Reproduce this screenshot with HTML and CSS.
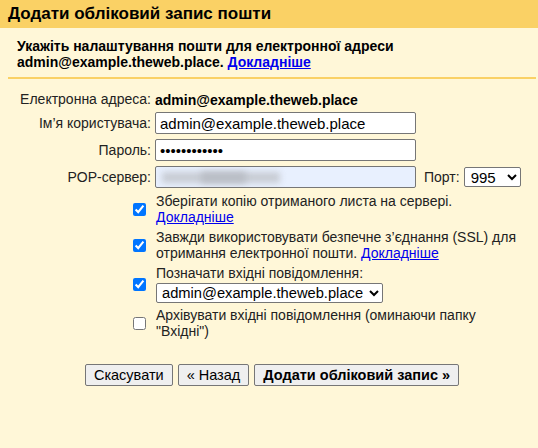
FILE: index.html
```html
<!DOCTYPE html>
<html lang="uk">
<head>
<meta charset="utf-8">
<link rel="stylesheet" href="styles.css">
</head>
<body>
<div class="dialog">
  <h1 class="title">Додати обліковий запис пошти</h1>
  <div class="intro">
    Укажіть налаштування пошти для електронної адреси<br>
    admin@example.theweb.place. <a href="#">Докладніше</a>
  </div>
  <div class="form">
    <div class="label">Електронна адреса:</div>
    <div class="value email">admin@example.theweb.place</div>

    <label class="label" for="u">Ім’я користувача:</label>
    <div class="value"><input id="u" class="field" type="text" value="admin@example.theweb.place"></div>

    <label class="label" for="p">Пароль:</label>
    <div class="value"><input id="p" class="field" type="password" value="abcdefghijkl"></div>

    <div class="label">POP-сервер:</div>
    <div class="value server-row">
      <div class="field autofill"><span class="blur"></span><span class="blur dark"></span></div>
      <span class="port-label">Порт:</span>
      <select class="port"><option>995</option></select>
    </div>
  </div>

  <div class="checks">
    <div class="check">
      <input type="checkbox" checked>
      <div class="check-text">Зберігати копію отриманого листа на сервері.<br><a href="#">Докладніше</a></div>
    </div>
    <div class="check">
      <input type="checkbox" checked>
      <div class="check-text">Завжди використовувати безпечне з’єднання (SSL) для<br>отримання електронної пошти. <a href="#">Докладніше</a></div>
    </div>
    <div class="check">
      <input type="checkbox" checked>
      <div class="check-text">Позначати вхідні повідомлення:<br><select class="label-select"><option>admin@example.theweb.place</option></select></div>
    </div>
    <div class="check">
      <input type="checkbox">
      <div class="check-text">Архівувати вхідні повідомлення (оминаючи папку<br>"Вхідні")</div>
    </div>
  </div>

  <div class="buttons">
    <button class="btn">Скасувати</button>
    <button class="btn">« Назад</button>
    <button class="btn primary">Додати обліковий запис »</button>
  </div>
</div>
</body>
</html>
```

FILE: styles.css
```css
html, body {
  margin: 0;
  padding: 0;
  background: #fff7d8;
  height: 100%;
}
body {
  font-family: "Liberation Sans", Arial, sans-serif;
  color: #222;
  font-size: 14px;
}
.title {
  margin: 0;
  height: 28px;
  line-height: 27px;
  padding: 0 8px;
  background: #fad165;
  color: #000;
  font-size: 17px;
  font-weight: bold;
}
.intro {
  margin: 0 2px 0 8px;
  padding: 10px 9px 7px;
  border-bottom: 2px solid #fad165;
  font-weight: bold;
  font-size: 14px;
  line-height: 16px;
  color: #000;
}
a {
  color: #0000ee;
  text-decoration: underline;
}
.form {
  display: grid;
  grid-template-columns: 143px auto;
  column-gap: 4px;
  row-gap: 5px;
  margin: 12px 0 0 8px;
  align-items: center;
  font-size: 14px;
}
.label {
  text-align: right;
  color: #222;
}
.email {
  font-weight: bold;
  color: #000;
  margin-bottom: -2px;
}
.field {
  box-sizing: border-box;
  width: 261px;
  height: 22px;
  margin: 0;
  padding: 1px 4px;
  border: 1px solid #767676;
  border-radius: 2px;
  background: #fff;
  font-family: "Liberation Sans", Arial, sans-serif;
  font-size: 15px;
  color: #000;
  display: block;
}
.server-row {
  display: flex;
  align-items: center;
}
.autofill {
  background: #e8f0fe;
  position: relative;
  overflow: hidden;
}
.blur {
  position: absolute;
  left: 6px;
  top: 5px;
  width: 118px;
  height: 11px;
  background: #c8ccd4;
  filter: blur(3px);
}
.blur.dark {
  left: 45px;
  width: 45px;
  background: #babec6;
}
.port-label {
  margin-left: 8px;
  color: #222;
}
.port {
  margin: 0 0 0 4px;
  height: 20px;
  width: 57px;
  font-family: "Liberation Sans", Arial, sans-serif;
  font-size: 15px;
  padding: 0 2px;
  border: 1px solid #767676;
  border-radius: 2px;
  background: #fff;
  color: #000;
}
.checks {
  margin: 5px 0 0 133px;
  display: flex;
  flex-direction: column;
  gap: 4px;
}
.check {
  display: flex;
  align-items: center;
  gap: 10px;
}
.check input {
  margin: 0;
  width: 13px;
  height: 13px;
  flex: none;
}
.check-text {
  line-height: 16px;
  color: #222;
}
.label-select {
  display: block;
  margin: 2px 0 0 0;
  height: 20px;
  width: 227px;
  font-family: "Liberation Sans", Arial, sans-serif;
  font-size: 14.7px;
  padding: 0 1px;
  border: 1px solid #767676;
  border-radius: 2px;
  background: #fff;
  color: #000;
}
.buttons {
  display: flex;
  justify-content: center;
  gap: 5px;
  margin-top: 25px;
  padding-left: 6px;
}
.btn {
  height: 22px;
  padding: 0 8px;
  font-family: "Liberation Sans", Arial, sans-serif;
  font-size: 14.5px;
  color: #000;
  background: #efefef;
  border: 1px solid #767676;
  border-radius: 2px;
}
.btn.primary {
  font-weight: bold;
}
```
